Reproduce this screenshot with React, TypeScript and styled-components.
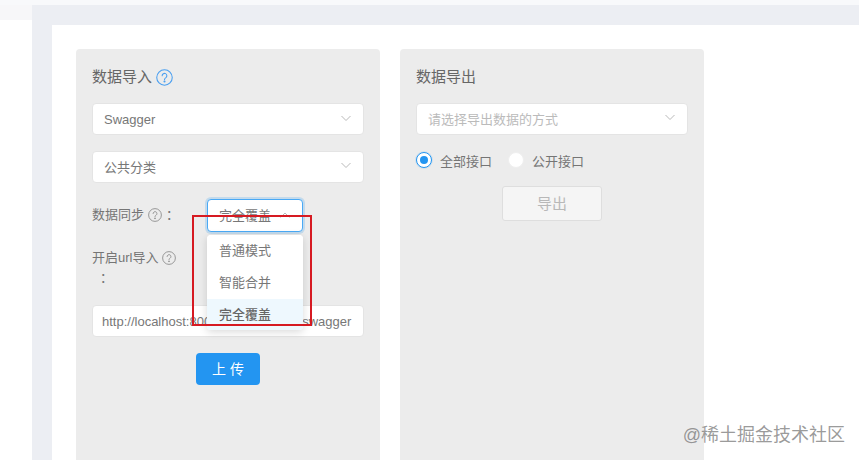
import { createGlobalStyle, styled } from 'styled-components';

const GlobalStyle = createGlobalStyle`
  html, body {
    margin: 0;
    padding: 0;
    background: #fff;
  }
  body {
    width: 859px;
    height: 460px;
    overflow: hidden;
    font-family: "Liberation Sans", "Noto Sans CJK SC", sans-serif;
    font-size: 13px;
    color: #757575;
  }
  * {
    box-sizing: border-box;
  }
`;

const Page = styled.div`
  position: relative;
  width: 859px;
  height: 460px;
  overflow: hidden;
  display: flex;
  flex-direction: column;
`;

const TopStrip = styled.div`
  height: 5px;
  flex: none;
  background: #f8f9fb;
`;

const Body = styled.div`
  flex: 1;
  display: flex;
  min-height: 0;
`;

const Gutter = styled.div`
  width: 32px;
  flex: none;
  background: linear-gradient(#f7f7f9 0 15px, #fff 15px);
`;

const Main = styled.div`
  flex: 1;
  padding: 20px 0 0 20px;
  background: #eceef3;
`;

const Content = styled.div`
  height: 100%;
  padding: 24px;
  background: #fff;
  display: flex;
  gap: 20px;
`;

const Card = styled.section`
  width: 304px;
  height: 440px;
  flex: none;
  padding: 16px;
  border-radius: 4px;
  background: #ececec;
`;

const Title = styled.h3`
  margin: 1px 0 15px;
  height: 22px;
  line-height: 24px;
  font-size: 15px;
  font-weight: 400;
  color: #666;
  display: flex;
  align-items: center;
  gap: 4px;
`;

const Select = styled.div<{ $placeholder?: boolean; $open?: boolean; $width?: number; $cjk?: boolean }>`
  width: ${(p) => (p.$width ? `${p.$width}px` : '100%')};
  height: ${(p) => (p.$open ? 33 : 32)}px;
  flex: none;
  padding: 0 12px ${(p) => (p.$cjk ? 2 : 0)}px 11px;
  display: flex;
  align-items: center;
  justify-content: space-between;
  border-radius: 4px;
  background: #fff;
  border: 1px solid ${(p) => (p.$open ? '#49a9f5' : '#e4e4e4')};
  box-shadow: ${(p) => (p.$open ? '0 0 0 2px rgba(35, 149, 241, 0.2)' : 'none')};
  color: ${(p) => (p.$placeholder ? '#bbb' : '#777')};
  margin-bottom: 16px;
`;

const FormRow = styled.div`
  display: flex;
  align-items: flex-start;
`;

const Label = styled.div`
  width: 115px;
  flex: none;
  line-height: 20px;
  color: #757575;
`;

const SyncLabel = styled(Label)`
  height: 33px;
  padding-bottom: 1px;
  display: flex;
  align-items: center;
  gap: 4px;
`;

const UrlLabel = styled(Label)`
  padding-right: 20px;
  margin: 0 0 17px;
  height: 40px;
`;

const HintIcon = styled.span`
  display: inline-flex;
  vertical-align: -3px;
  margin-left: 4px;
`;

const Colon = styled.span`
  display: block;
  padding-left: 8px;
`;

const UrlInput = styled.div`
  height: 32px;
  padding: 0 0 0 9px;
  display: flex;
  align-items: center;
  border-radius: 4px;
  border: 1px solid #e4e4e4;
  background: #fff;
  color: #777;
  white-space: nowrap;
  overflow: hidden;
  margin-bottom: 16px;
`;

const Centered = styled.div`
  display: flex;
  justify-content: center;
`;

const UploadButton = styled.button`
  width: 64px;
  height: 32px;
  padding: 0 0 2px;
  border: 0;
  border-radius: 4px;
  background: #2395f1;
  color: #fff;
  font: inherit;
  font-size: 14px;
`;

const ExportButton = styled.button`
  width: 100px;
  height: 35px;
  padding: 0 0 2px;
  border: 1px solid #dedede;
  border-radius: 3px;
  background: #f5f5f5;
  color: #b8b8b8;
  font: inherit;
  font-size: 15px;
`;

const RadioRow = styled.div`
  height: 20px;
  margin: -1px 0 16px;
  display: flex;
  align-items: center;
  gap: 16px;
`;

const RadioItem = styled.label`
  display: flex;
  align-items: center;
  gap: 8px;
  color: #757575;
`;

const RadioDot = styled.span<{ $checked?: boolean }>`
  width: 16px;
  height: 16px;
  border-radius: 50%;
  background: #fff;
  border: 1px solid ${(p) => (p.$checked ? '#2395f1' : '#efefef')};
  box-shadow: ${(p) => (p.$checked ? '0 0 0 1px rgba(35, 149, 241, 0.12)' : 'none')};
  display: flex;
  align-items: center;
  justify-content: center;
  &::after {
    content: '';
    display: ${(p) => (p.$checked ? 'block' : 'none')};
    width: 8px;
    height: 8px;
    border-radius: 50%;
    background: #2395f1;
  }
`;

const Dropdown = styled.ul`
  position: absolute;
  left: 207px;
  top: 235px;
  width: 96px;
  height: 95px;
  margin: 0;
  padding: 0;
  list-style: none;
  border-radius: 4px;
  background: #fff;
  overflow: hidden;
  box-shadow: 0 2px 8px rgba(0, 0, 0, 0.15);
`;

const Option = styled.li<{ $active?: boolean }>`
  height: 32px;
  padding: 0 12px 3px;
  display: flex;
  align-items: center;
  background: ${(p) => (p.$active ? '#eef8fe' : '#fff')};
  color: ${(p) => (p.$active ? '#666' : '#777')};
  font-weight: ${(p) => (p.$active ? 500 : 400)};
`;

const Highlight = styled.div`
  position: absolute;
  left: 192px;
  top: 215px;
  width: 120px;
  height: 111px;
  border: 2px solid #d61a22;
  pointer-events: none;
`;

const Watermark = styled.div`
  position: absolute;
  right: 14px;
  top: 423px;
  font-size: 18px;
  line-height: 24px;
  color: rgba(110, 110, 110, 0.7);
`;

const Chevron = ({ up }: { up?: boolean }) => (
  <svg width="10" height="10" viewBox="0 0 10 10" fill="none" stroke="#b9b9b9" strokeWidth="1">
    <path d={up ? 'M0.5 7.5 5 3 9.5 7.5' : 'M0.5 2 5 6.5 9.5 2'} />
  </svg>
);

const Help = ({ size = 14, color = '#8c8c8c' }: { size?: number; color?: string }) => (
  <svg width={size} height={size} viewBox="0 0 16 16" fill="none" stroke={color} strokeWidth="1">
    <circle cx="8" cy="8" r="7.3" />
    <path d="M5.8 6.3a2.2 2.2 0 1 1 3.5 1.8c-.8.5-1.3 1-1.3 2" strokeLinecap="round" />
    <circle cx="8" cy="11.8" r=".5" fill={color} />
  </svg>
);

const App = () => {
  return (
    <Page>
      <GlobalStyle />
      <TopStrip />
      <Body>
        <Gutter />
        <Main>
          <Content>
            <Card>
              <Title>
                数据导入 <Help size={17} color="#4a9ff0" />
              </Title>
              <Select>
                Swagger
                <Chevron />
              </Select>
              <Select $cjk>
                公共分类
                <Chevron />
              </Select>
              <FormRow>
                <SyncLabel>
                  数据同步 <Help /> ：
                </SyncLabel>
                <Select $open $cjk $width={96}>
                  完全覆盖
                  <Chevron up />
                </Select>
              </FormRow>
              <UrlLabel>
                开启url导入
                <HintIcon>
                  <Help />
                </HintIcon>
                <Colon>：</Colon>
              </UrlLabel>
              <UrlInput>http://localhost:8000/v2/api-docs/v/swagger</UrlInput>
              <Centered>
                <UploadButton>上 传</UploadButton>
              </Centered>
            </Card>
            <Card>
              <Title>数据导出</Title>
              <Select $placeholder $cjk>
                请选择导出数据的方式
                <Chevron />
              </Select>
              <RadioRow>
                <RadioItem>
                  <RadioDot $checked />
                  全部接口
                </RadioItem>
                <RadioItem>
                  <RadioDot />
                  公开接口
                </RadioItem>
              </RadioRow>
              <Centered>
                <ExportButton>导出</ExportButton>
              </Centered>
            </Card>
          </Content>
        </Main>
      </Body>
      <Dropdown>
        <Option>普通模式</Option>
        <Option>智能合并</Option>
        <Option $active>完全覆盖</Option>
      </Dropdown>
      <Highlight />
      <Watermark>@稀土掘金技术社区</Watermark>
    </Page>
  );
};

export default App;
